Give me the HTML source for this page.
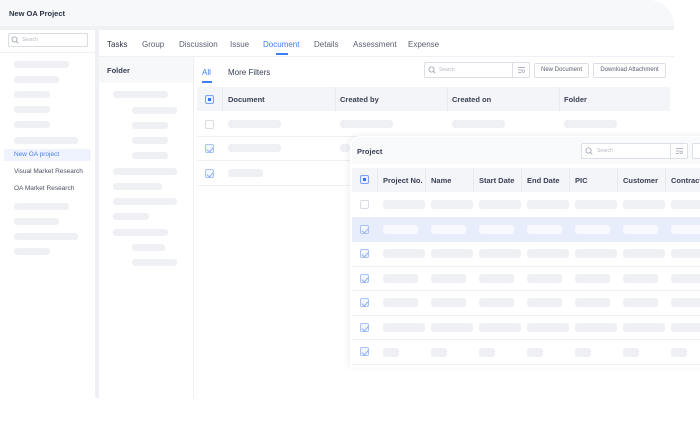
<!DOCTYPE html>
<html><head><meta charset="utf-8"><style>
*{margin:0;padding:0;box-sizing:border-box}
body{width:700px;height:441px;overflow:hidden;background:#fff;font-family:"Liberation Sans",sans-serif;position:relative;color:#2b3245}
.a{position:absolute}
.sk{position:absolute;height:7px;border-radius:3px;background:#eef0f4}
.t{position:absolute;font-size:8px;white-space:nowrap}
.h{font-weight:bold;color:#3a4157;font-size:7.5px}
.cb{position:absolute;width:9px;height:9px;border:1px solid #d9dce3;border-radius:2px;background:#fff}
.cb.c{border-color:#a9c2f5;background:#f3f7ff}
.cb.c:after{content:"";position:absolute;left:2px;top:1px;width:3px;height:5px;border:solid #8eaef0;border-width:0 1px 1px 0;transform:rotate(40deg)}
.cb.h2{border-color:#7da1f3;background:#eaf0fe}
.cb.h2:after{content:"";position:absolute;left:2px;top:2px;width:3px;height:3px;background:#3b6ff5}
.inp{position:absolute;border:1px solid #dcdfe6;border-radius:2px;background:#fff}
.btn{position:absolute;border:1px solid #dcdfe6;border-radius:2px;background:#fff;font-size:6px;color:#5a6070;text-align:center;line-height:13px}
.rl{position:absolute;height:1px;background:#eef0f3}
</style></head><body>
<div class="a" style="left:0;top:0;width:674px;height:398px;background:#fff;border-top-right-radius:26px;overflow:hidden">
 <div class="a" style="left:0;top:0;width:674px;height:26px;background:#f7f8fa"></div>
 <div class="t" style="left:9px;top:9px;font-size:7.5px;font-weight:bold;color:#2b3245">New OA Project</div>
 <div class="a" style="left:0;top:26px;width:674px;height:4px;background:#f0f1f5"></div>
 <div class="a" style="left:95px;top:26px;width:4px;height:372px;background:#f0f1f5"></div>
 <div class="inp" style="left:8px;top:33px;width:80px;height:14px;border-color:#d9dce3"></div>
 <svg class="a" style="left:11px;top:36px" width="8" height="8" viewBox="0 0 8 8"><circle cx="3.5" cy="3.5" r="2.6" fill="none" stroke="#9aa0ad" stroke-width=".8"/><path d="M5.4 5.4L7.3 7.3" stroke="#9aa0ad" stroke-width=".8"/></svg>
 <div class="t" style="left:22px;top:37px;font-size:5px;color:#b6bac4">Search</div>
 <div class="rl" style="left:0;top:52px;width:95px"></div>
 <div class="sk" style="left:14px;top:61px;width:55px"></div>
 <div class="sk" style="left:14px;top:76px;width:45px"></div>
 <div class="sk" style="left:14px;top:91px;width:36px"></div>
 <div class="sk" style="left:14px;top:106px;width:36px"></div>
 <div class="sk" style="left:14px;top:121px;width:36px"></div>
 <div class="sk" style="left:14px;top:137px;width:64px"></div>
 <div class="a" style="left:4px;top:149px;width:87px;height:12px;background:#eef3fe;border-radius:2px"></div>
 <div class="t" style="left:14px;top:151px;font-size:6.5px;color:#4a7ef0">New OA project</div>
 <div class="t" style="left:14px;top:168px;font-size:6.5px;color:#4b5162">Visual Market Research</div>
 <div class="t" style="left:14px;top:185px;font-size:6.5px;color:#4b5162">OA Market Research</div>
 <div class="sk" style="left:14px;top:203px;width:55px"></div>
 <div class="sk" style="left:14px;top:218px;width:45px"></div>
 <div class="sk" style="left:14px;top:233px;width:64px"></div>
 <div class="sk" style="left:14px;top:248px;width:36px"></div>
 <div class="t" style="left:107px;top:40px;color:#2b3245">Tasks</div>
 <div class="t" style="left:142px;top:40px;color:#5a6070">Group</div>
 <div class="t" style="left:179px;top:40px;color:#5a6070">Discussion</div>
 <div class="t" style="left:230px;top:40px;color:#5a6070">Issue</div>
 <div class="t" style="left:263px;top:40px;color:#3b7ef6">Document</div>
 <div class="a" style="left:276px;top:53px;width:12px;height:1.5px;background:#3b7ef6"></div>
 <div class="t" style="left:314px;top:40px;color:#5a6070">Details</div>
 <div class="t" style="left:353px;top:40px;color:#5a6070">Assessment</div>
 <div class="t" style="left:408px;top:40px;color:#5a6070">Expense</div>
 <div class="rl" style="left:99px;top:56px;width:575px"></div>
 <div class="a" style="left:99px;top:57px;width:94px;height:26px;background:#f7f8fa"></div>
 <div class="t h" style="left:107px;top:66px">Folder</div>
 <div class="a" style="left:193px;top:57px;width:1px;height:341px;background:#eef0f3"></div>
 <div class="sk" style="left:113px;top:91px;width:55px"></div>
 <div class="sk" style="left:132px;top:107px;width:45px"></div>
 <div class="sk" style="left:132px;top:122px;width:36px"></div>
 <div class="sk" style="left:132px;top:137px;width:36px"></div>
 <div class="sk" style="left:132px;top:152px;width:36px"></div>
 <div class="sk" style="left:113px;top:168px;width:64px"></div>
 <div class="sk" style="left:113px;top:183px;width:49px"></div>
 <div class="sk" style="left:113px;top:198px;width:64px"></div>
 <div class="sk" style="left:113px;top:213px;width:36px"></div>
 <div class="sk" style="left:113px;top:229px;width:55px"></div>
 <div class="sk" style="left:132px;top:244px;width:33px"></div>
 <div class="sk" style="left:132px;top:259px;width:45px"></div>
 <div class="t" style="left:202px;top:68px;color:#3b7ef6">All</div>
 <div class="a" style="left:202px;top:81px;width:10px;height:1.5px;background:#3b7ef6"></div>
 <div class="t" style="left:228px;top:68px;color:#3a4157">More Filters</div>
 <div class="inp" style="left:424px;top:62px;width:106px;height:16px"></div>
 <div class="a" style="left:512px;top:62px;width:1px;height:16px;background:#dcdfe6"></div>
 <svg class="a" style="left:428px;top:66px" width="8" height="8" viewBox="0 0 8 8"><circle cx="3.5" cy="3.5" r="2.6" fill="none" stroke="#9aa0ad" stroke-width=".8"/><path d="M5.4 5.4L7.3 7.3" stroke="#9aa0ad" stroke-width=".8"/></svg>
 <div class="t" style="left:439px;top:67px;font-size:5px;color:#b6bac4">Search</div>
 <svg class="a" style="left:517px;top:66px" width="9" height="8" viewBox="0 0 9 8"><path d="M1 1.5H8M1 4H4.5M1 6.5H4" stroke="#9aa0ad" stroke-width=".7"/><circle cx="6.3" cy="5.2" r="1.3" fill="none" stroke="#9aa0ad" stroke-width=".6"/></svg>
 <div class="btn" style="left:534px;top:63px;width:55px;height:15px">New Document</div>
 <div class="btn" style="left:593px;top:63px;width:73px;height:15px">Download Attachment</div>
 <div class="a" style="left:197px;top:87px;width:473px;height:24px;background:#f4f5f8"></div>
 <div class="a" style="left:222px;top:87px;width:1px;height:24px;background:#e8eaef"></div>
 <div class="a" style="left:335px;top:87px;width:1px;height:24px;background:#e8eaef"></div>
 <div class="a" style="left:447px;top:87px;width:1px;height:24px;background:#e8eaef"></div>
 <div class="a" style="left:559px;top:87px;width:1px;height:24px;background:#e8eaef"></div>
 <div class="cb h2" style="left:205px;top:95px"></div>
 <div class="t h" style="left:228px;top:95px">Document</div>
 <div class="t h" style="left:340px;top:95px">Created by</div>
 <div class="t h" style="left:452px;top:95px">Created on</div>
 <div class="t h" style="left:564px;top:95px">Folder</div>
 <div class="cb" style="left:205px;top:120px"></div>
 <div class="sk" style="left:228px;top:120px;width:53px;height:8px"></div>
 <div class="sk" style="left:340px;top:120px;width:53px;height:8px"></div>
 <div class="sk" style="left:452px;top:120px;width:53px;height:8px"></div>
 <div class="sk" style="left:564px;top:120px;width:53px;height:8px"></div>
 <div class="rl" style="left:197px;top:136px;width:473px"></div>
 <div class="cb c" style="left:205px;top:144px"></div>
 <div class="sk" style="left:228px;top:144px;width:53px;height:8px"></div>
 <div class="sk" style="left:340px;top:144px;width:10px;height:8px"></div>
 <div class="rl" style="left:197px;top:160px;width:473px"></div>
 <div class="cb c" style="left:205px;top:169px"></div>
 <div class="sk" style="left:228px;top:169px;width:35px;height:8px"></div>
 <div class="rl" style="left:197px;top:185px;width:155px"></div>
</div>
<div class="a" style="left:350px;top:136px;width:360px;height:232px;background:#fff;border-top-left-radius:10px;box-shadow:-2px -1px 6px rgba(30,40,80,.06)"></div>
<div class="a" style="left:352px;top:137px;width:348px;height:27px;background:#f9fafc;border-top-left-radius:9px"></div>
<div class="t h" style="left:357px;top:147px">Project</div>
<div class="inp" style="left:581px;top:143px;width:107px;height:16px"></div>
<div class="a" style="left:670px;top:143px;width:1px;height:16px;background:#dcdfe6"></div>
<svg class="a" style="left:585px;top:147px" width="8" height="8" viewBox="0 0 8 8"><circle cx="3.5" cy="3.5" r="2.6" fill="none" stroke="#9aa0ad" stroke-width=".8"/><path d="M5.4 5.4L7.3 7.3" stroke="#9aa0ad" stroke-width=".8"/></svg>
<div class="t" style="left:597px;top:148px;font-size:5px;color:#b6bac4">Search</div>
<svg class="a" style="left:675px;top:147px" width="9" height="8" viewBox="0 0 9 8"><path d="M1 1.5H8M1 4H4.5M1 6.5H4" stroke="#9aa0ad" stroke-width=".7"/><circle cx="6.3" cy="5.2" r="1.3" fill="none" stroke="#9aa0ad" stroke-width=".6"/></svg>
<div class="btn" style="left:692px;top:143px;width:20px;height:16px"></div>
<div class="a" style="left:352px;top:168px;width:348px;height:24px;background:#f4f5f8"></div>
<div class="a" style="left:377px;top:168px;width:1px;height:24px;background:#e8eaef"></div>
<div class="a" style="left:425px;top:168px;width:1px;height:24px;background:#e8eaef"></div>
<div class="a" style="left:473px;top:168px;width:1px;height:24px;background:#e8eaef"></div>
<div class="a" style="left:521px;top:168px;width:1px;height:24px;background:#e8eaef"></div>
<div class="a" style="left:569px;top:168px;width:1px;height:24px;background:#e8eaef"></div>
<div class="a" style="left:617px;top:168px;width:1px;height:24px;background:#e8eaef"></div>
<div class="a" style="left:665px;top:168px;width:1px;height:24px;background:#e8eaef"></div>
<div class="cb h2" style="left:360px;top:175px"></div>
<div class="t h" style="left:383px;top:176px">Project No.</div>
<div class="t h" style="left:431px;top:176px">Name</div>
<div class="t h" style="left:479px;top:176px">Start Date</div>
<div class="t h" style="left:527px;top:176px">End Date</div>
<div class="t h" style="left:575px;top:176px">PIC</div>
<div class="t h" style="left:623px;top:176px">Customer</div>
<div class="t h" style="left:671px;top:176px">Contract</div>
<div class="a" style="left:352px;top:217px;width:348px;height:25px;background:#e7edfb"></div>
<div class="cb" style="left:360px;top:200px"></div>
<div class="cb c" style="left:360px;top:225px"></div>
<div class="cb c" style="left:360px;top:249px"></div>
<div class="cb c" style="left:360px;top:274px"></div>
<div class="cb c" style="left:360px;top:298px"></div>
<div class="cb c" style="left:360px;top:323px"></div>
<div class="cb c" style="left:360px;top:347px"></div>
<div class="rl" style="left:352px;top:266px;width:348px"></div>
<div class="rl" style="left:352px;top:290px;width:348px"></div>
<div class="rl" style="left:352px;top:315px;width:348px"></div>
<div class="rl" style="left:352px;top:339px;width:348px"></div>
<div class="rl" style="left:352px;top:364px;width:348px"></div>
<div class="sk" style="left:383px;top:200px;width:42px;height:9px"></div><div class="sk" style="left:431px;top:200px;width:42px;height:9px"></div><div class="sk" style="left:479px;top:200px;width:42px;height:9px"></div><div class="sk" style="left:527px;top:200px;width:42px;height:9px"></div><div class="sk" style="left:575px;top:200px;width:42px;height:9px"></div><div class="sk" style="left:623px;top:200px;width:42px;height:9px"></div><div class="sk" style="left:671px;top:200px;width:42px;height:9px"></div>
<div class="sk" style="left:383px;top:225px;width:35px;height:9px;background:#f7f9fe"></div><div class="sk" style="left:431px;top:225px;width:35px;height:9px;background:#f7f9fe"></div><div class="sk" style="left:479px;top:225px;width:35px;height:9px;background:#f7f9fe"></div><div class="sk" style="left:527px;top:225px;width:35px;height:9px;background:#f7f9fe"></div><div class="sk" style="left:575px;top:225px;width:35px;height:9px;background:#f7f9fe"></div><div class="sk" style="left:623px;top:225px;width:35px;height:9px;background:#f7f9fe"></div><div class="sk" style="left:671px;top:225px;width:35px;height:9px;background:#f7f9fe"></div>
<div class="sk" style="left:383px;top:249px;width:42px;height:9px"></div><div class="sk" style="left:431px;top:249px;width:42px;height:9px"></div><div class="sk" style="left:479px;top:249px;width:42px;height:9px"></div><div class="sk" style="left:527px;top:249px;width:42px;height:9px"></div><div class="sk" style="left:575px;top:249px;width:42px;height:9px"></div><div class="sk" style="left:623px;top:249px;width:42px;height:9px"></div><div class="sk" style="left:671px;top:249px;width:42px;height:9px"></div>
<div class="sk" style="left:383px;top:274px;width:35px;height:9px"></div><div class="sk" style="left:431px;top:274px;width:35px;height:9px"></div><div class="sk" style="left:479px;top:274px;width:35px;height:9px"></div><div class="sk" style="left:527px;top:274px;width:35px;height:9px"></div><div class="sk" style="left:575px;top:274px;width:35px;height:9px"></div><div class="sk" style="left:623px;top:274px;width:35px;height:9px"></div><div class="sk" style="left:671px;top:274px;width:35px;height:9px"></div>
<div class="sk" style="left:383px;top:298px;width:35px;height:9px"></div><div class="sk" style="left:431px;top:298px;width:35px;height:9px"></div><div class="sk" style="left:479px;top:298px;width:35px;height:9px"></div><div class="sk" style="left:527px;top:298px;width:35px;height:9px"></div><div class="sk" style="left:575px;top:298px;width:35px;height:9px"></div><div class="sk" style="left:623px;top:298px;width:35px;height:9px"></div><div class="sk" style="left:671px;top:298px;width:35px;height:9px"></div>
<div class="sk" style="left:383px;top:323px;width:42px;height:9px"></div><div class="sk" style="left:431px;top:323px;width:42px;height:9px"></div><div class="sk" style="left:479px;top:323px;width:42px;height:9px"></div><div class="sk" style="left:527px;top:323px;width:42px;height:9px"></div><div class="sk" style="left:575px;top:323px;width:42px;height:9px"></div><div class="sk" style="left:623px;top:323px;width:42px;height:9px"></div><div class="sk" style="left:671px;top:323px;width:42px;height:9px"></div>
<div class="sk" style="left:383px;top:348px;width:16px;height:9px"></div><div class="sk" style="left:431px;top:348px;width:16px;height:9px"></div><div class="sk" style="left:479px;top:348px;width:16px;height:9px"></div><div class="sk" style="left:527px;top:348px;width:16px;height:9px"></div><div class="sk" style="left:575px;top:348px;width:16px;height:9px"></div><div class="sk" style="left:623px;top:348px;width:16px;height:9px"></div><div class="sk" style="left:671px;top:348px;width:16px;height:9px"></div>
</body></html>
